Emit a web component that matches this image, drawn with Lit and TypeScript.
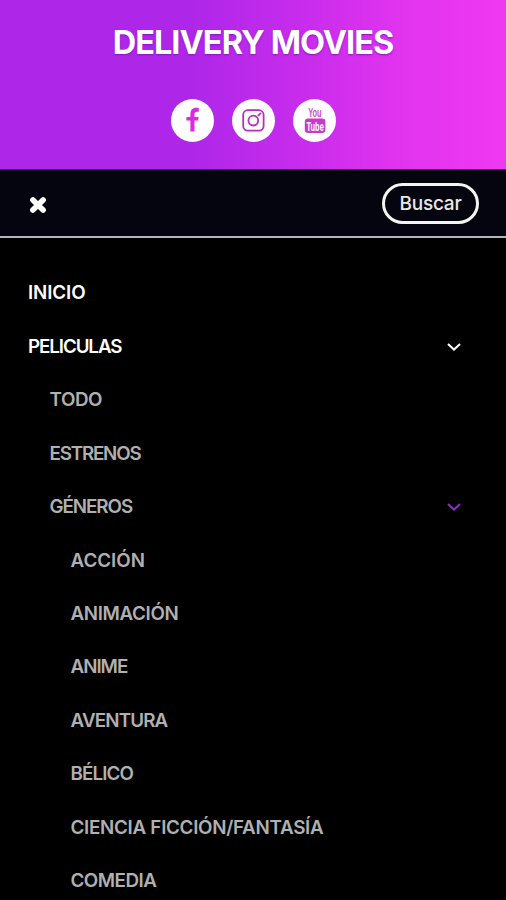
import { LitElement, html, css, svg, nothing } from "lit";
import { customElement, property } from "lit/decorators.js";
import { classMap } from "lit/directives/class-map.js";

interface Entry {
  label: string;
  level: number;
  tracking: number;
  open?: boolean;
}

const ENTRIES: Entry[] = [
  { label: "INICIO", level: 0, tracking: -0.1 },
  { label: "PELICULAS", level: 0, tracking: -1.1, open: true },
  { label: "TODO", level: 1, tracking: -0.4 },
  { label: "ESTRENOS", level: 1, tracking: -1.2 },
  { label: "GÉNEROS", level: 1, tracking: -1.05, open: true },
  { label: "ACCIÓN", level: 2, tracking: 0 },
  { label: "ANIMACIÓN", level: 2, tracking: -0.35 },
  { label: "ANIME", level: 2, tracking: -1 },
  { label: "AVENTURA", level: 2, tracking: -0.85 },
  { label: "BÉLICO", level: 2, tracking: -0.9 },
  { label: "CIENCIA FICCIÓN/FANTASÍA", level: 2, tracking: -0.28 },
  { label: "COMEDIA", level: 2, tracking: -0.5 },
];

@customElement("social-icon")
export class SocialIcon extends LitElement {
  @property() name = "";

  static styles = css`
    :host {
      display: block;
      width: 43px;
      height: 43px;
    }
    .disc {
      display: block;
      width: 43px;
      height: 43px;
      border-radius: 50%;
      background: #fff;
    }
    .yt {
      font-family: "Liberation Sans", Arial, sans-serif;
      font-size: 12.5px;
    }
  `;

  private glyph() {
    if (this.name === "facebook") {
      return svg`<path d="M19.4 32.4V21.4h-4v-3.4h4v-2.6c0-4.5 2.3-6.6 5.6-6.6 1.2 0 2.2.1 2.8.3v3.7h-1.6c-2.1 0-2.7.9-2.7 2.6v2.6h4.1l-.5 3.4h-3.6v11z" fill="#dc29e2"/>`;
    }
    if (this.name === "instagram") {
      return svg`<g fill="none" stroke="#b72fbd" stroke-width="1.8">
        <rect x="11.2" y="11.2" width="20.4" height="20.4" rx="4.6"/>
        <circle cx="21.3" cy="21.6" r="4.9"/>
        <path d="M26.4 16.4l2.1-2" stroke-width="1.8" stroke-linecap="round"/></g>`;
    }
    return svg`<rect x="11.8" y="19.6" width="20.6" height="14.4" rx="3.2" fill="#c83bc9"/>
      <text class="yt" x="15.2" y="18.3" textLength="13.4" lengthAdjust="spacingAndGlyphs" fill="#c750c7">You</text>
      <text class="yt" x="13.6" y="31.6" textLength="17.2" lengthAdjust="spacingAndGlyphs" fill="#fff">Tube</text>`;
  }

  render() {
    return html`<svg class="disc" viewBox="0 0 43 43">${this.glyph()}</svg>`;
  }
}

@customElement("menu-row")
export class MenuRow extends LitElement {
  @property({ attribute: false }) entry!: Entry;

  static styles = css`
    :host {
      display: block;
    }
    .row {
      display: flex;
      align-items: center;
      justify-content: space-between;
      height: 53.45px;
      padding: 0 44px 0 28px;
      color: #fff;
    }
    .l1,
    .l2 {
      color: #b0b0b0;
    }
    .l1 {
      padding-left: 49.5px;
    }
    .l2 {
      padding-left: 70.5px;
    }
    .label {
      white-space: nowrap;
    }
    .chevron {
      width: 16px;
      height: 10px;
      stroke: #fff;
    }
    .l1 .chevron {
      stroke: #8b2fbf;
    }
  `;

  render() {
    const e = this.entry;
    return html`<div class=${classMap({ row: true, l1: e.level === 1, l2: e.level === 2 })}>
      <span class="label" style="letter-spacing:${e.tracking}px">${e.label}</span>
      ${e.open
        ? html`<svg class="chevron" viewBox="0 0 16 10" fill="none" stroke-width="2"><path d="M2 2l6 5.6 6-5.6" /></svg>`
        : nothing}
    </div>`;
  }
}

@customElement("app-root")
export class AppRoot extends LitElement {
  static styles = css`
    :host {
      display: block;
      height: 900px;
      overflow: hidden;
      background: #000;
      font: 600 18.8px/1 Inter, "Open Sans", sans-serif;
    }
    .hero {
      box-sizing: border-box;
      height: 170px;
      padding-top: 24px;
      background: linear-gradient(90deg, #ae27e9 0%, #ae27e9 38%, #c82cec 60%, #e234ef 80%, #ef38f1 100%);
      border-bottom: 1px solid #54106b;
    }
    .title {
      margin: 0;
      text-align: center;
      color: #fff;
      font-size: 32.5px;
      line-height: 38px;
      font-weight: 700;
      letter-spacing: -0.95px;
      text-shadow: 0 1px 2px #8a14c0;
    }
    .social {
      display: flex;
      justify-content: center;
      gap: 18px;
      padding-top: 37px;
    }
    .bar {
      box-sizing: border-box;
      display: flex;
      justify-content: space-between;
      align-items: center;
      height: 68px;
      padding: 0 27px 0 28px;
      background: #04050f;
      border-bottom: 2px solid #b9b4bc;
    }
    .close {
      width: 20px;
      height: 20px;
      margin-top: 3px;
    }
    .search {
      box-sizing: border-box;
      width: 97px;
      height: 41px;
      padding: 0;
      border: 3px solid #f4f4f0;
      border-radius: 21px;
      background: #04050f;
      color: #e8e8e8;
      font: 500 19px/1 Inter, sans-serif;
      letter-spacing: -0.2px;
    }
    .menu {
      padding-top: 29px;
    }
  `;

  render() {
    return html`
      <header class="hero">
        <h1 class="title">DELIVERY MOVIES</h1>
        <div class="social">
          <social-icon name="facebook"></social-icon>
          <social-icon name="instagram"></social-icon>
          <social-icon name="youtube"></social-icon>
        </div>
      </header>
      <div class="bar">
        <svg class="close" viewBox="0 0 20 20" stroke="#fff" stroke-width="5.6" stroke-linecap="round">
          <path d="M4.9 4.9l10.2 10.2M15.1 4.9L4.9 15.1" />
        </svg>
        <button class="search">Buscar</button>
      </div>
      <nav class="menu">${ENTRIES.map((e) => html`<menu-row .entry=${e}></menu-row>`)}</nav>
    `;
  }
}
